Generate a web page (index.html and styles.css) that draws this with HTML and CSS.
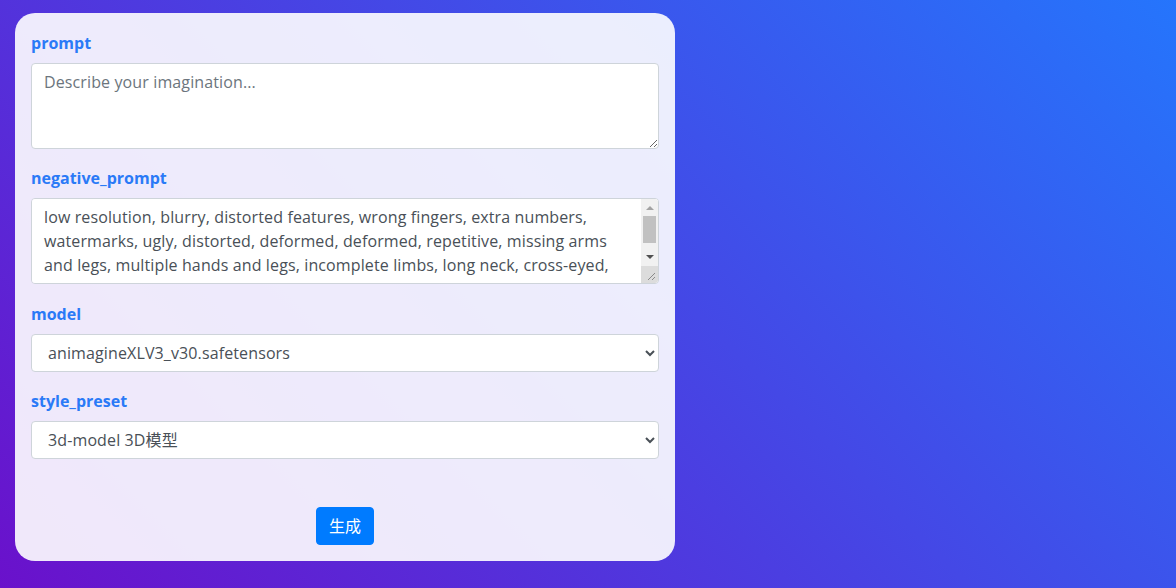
FILE: index.html
```html
<!DOCTYPE html>
<html lang="zh">
<head>
    <meta charset="UTF-8">
    <meta name="viewport" content="width=device-width, initial-scale=1.0">
    <title>生成</title>
    <link rel="stylesheet" href="styles.css">
</head>
<body>

    <div class="card">
        <form>
            <div class="form-group">
                <label for="prompt">prompt</label>
                <textarea id="prompt" class="form-control" rows="3" placeholder="Describe your imagination..."></textarea>
            </div>

            <div class="form-group">
                <label for="negative_prompt">negative_prompt</label>
                <div class="textarea-wrap">
                    <textarea id="negative_prompt" class="form-control has-scroll" rows="3">low resolution, blurry, distorted features, wrong fingers, extra numbers, watermarks, ugly, distorted, deformed, deformed, repetitive, missing arms and legs, multiple hands and legs, incomplete limbs, long neck, cross-eyed, glazed eyes, lax eyes, squinting, deformed eyes, bad anatomy, bad hands, text, error, missing fingers, cropped, worst quality, low quality, jpeg artifacts, signature, username</textarea>
                    <!-- desktop style scrollbar, headless hides the real one -->
                    <div class="fake-scrollbar">
                        <div class="sb-track">
                            <span class="sb-arrow up"></span>
                            <span class="sb-thumb"></span>
                            <span class="sb-arrow down"></span>
                        </div>
                        <div class="sb-corner">
                            <svg width="17" height="17" viewBox="0 0 17 17">
                                <path d="M14 7 L7 14 M14 11 L11 14" stroke="#8a8a8a" stroke-width="1" fill="none"/>
                            </svg>
                        </div>
                    </div>
                </div>
            </div>

            <div class="form-group">
                <label for="model">model</label>
                <select id="model" class="form-control">
                    <option>animagineXLV3_v30.safetensors</option>
                </select>
            </div>

            <div class="form-group">
                <label for="style_preset">style_preset</label>
                <select id="style_preset" class="form-control">
                    <option>3d-model 3D模型</option>
                </select>
            </div>

            <div class="actions">
                <button type="button" class="btn-primary">生成</button>
            </div>
        </form>
    </div>

</body>
</html>
```

FILE: styles.css
```css
html, body {
    height: 100%;
}

body {
    font-family: 'Open Sans', 'Noto Sans CJK SC', sans-serif;
    font-size: 16px;
    line-height: 1.5;
    color: #212529;
    margin: 0;
    padding: 13px 15px;
    box-sizing: border-box;
    background: linear-gradient(45deg, #6a11cb 0%, #2575fc 100%);
}

.card {
    width: 660px;
    box-sizing: border-box;
    background-color: rgba(255, 255, 255, 0.9);
    border-radius: 20px;
    padding: 18px 16px 16px;
}

.form-group {
    margin-bottom: 17.4px;
}

label {
    display: block;
    font-weight: bold;
    color: #2a7af7;
    margin-bottom: 8px;
}

.form-control {
    display: block;
    width: 100%;
    box-sizing: border-box;
    padding: 6px 12px;
    font-family: inherit;
    font-size: 16px;
    line-height: 1.5;
    letter-spacing: 0.12px;
    color: #495057;
    background-color: #fff;
    border: 1px solid #ced4da;
    border-radius: 4px;
}

textarea.form-control {
    height: 86px;
    resize: vertical;
}

textarea.form-control::placeholder {
    color: #6c757d;
}

.textarea-wrap {
    position: relative;
}

textarea.has-scroll {
    padding-right: 29px;
}

.fake-scrollbar {
    position: absolute;
    top: 1px;
    right: 1px;
    bottom: 1px;
    width: 17px;
    display: flex;
    flex-direction: column;
    border-top-right-radius: 3px;
    border-bottom-right-radius: 3px;
    overflow: hidden;
}

.sb-track {
    flex: 1;
    background-color: #f1f1f1;
    display: flex;
    flex-direction: column;
    align-items: center;
}

.sb-arrow {
    width: 0;
    height: 0;
    border-left: 4px solid transparent;
    border-right: 4px solid transparent;
}

.sb-arrow.up {
    border-bottom: 4px solid #a3a3a3;
    margin: 7px 0 6px;
}

.sb-arrow.down {
    border-top: 4px solid #505050;
    margin-top: auto;
    margin-bottom: 7px;
}

.sb-thumb {
    width: 13px;
    height: 27px;
    background-color: #c1c1c1;
}

.sb-corner {
    height: 17px;
    background-color: #dcdcdc;
}

.sb-corner svg {
    display: block;
}

select.form-control {
    height: 38px;
    padding: 6px 12px;
}

.actions {
    text-align: center;
    padding-top: 30.5px;
}

.btn-primary {
    font-family: inherit;
    font-size: 16px;
    line-height: 1.5;
    padding: 6px 12px;
    color: #fff;
    background-color: #007bff;
    border: 1px solid #007bff;
    border-radius: 4px;
    cursor: pointer;
}
```
